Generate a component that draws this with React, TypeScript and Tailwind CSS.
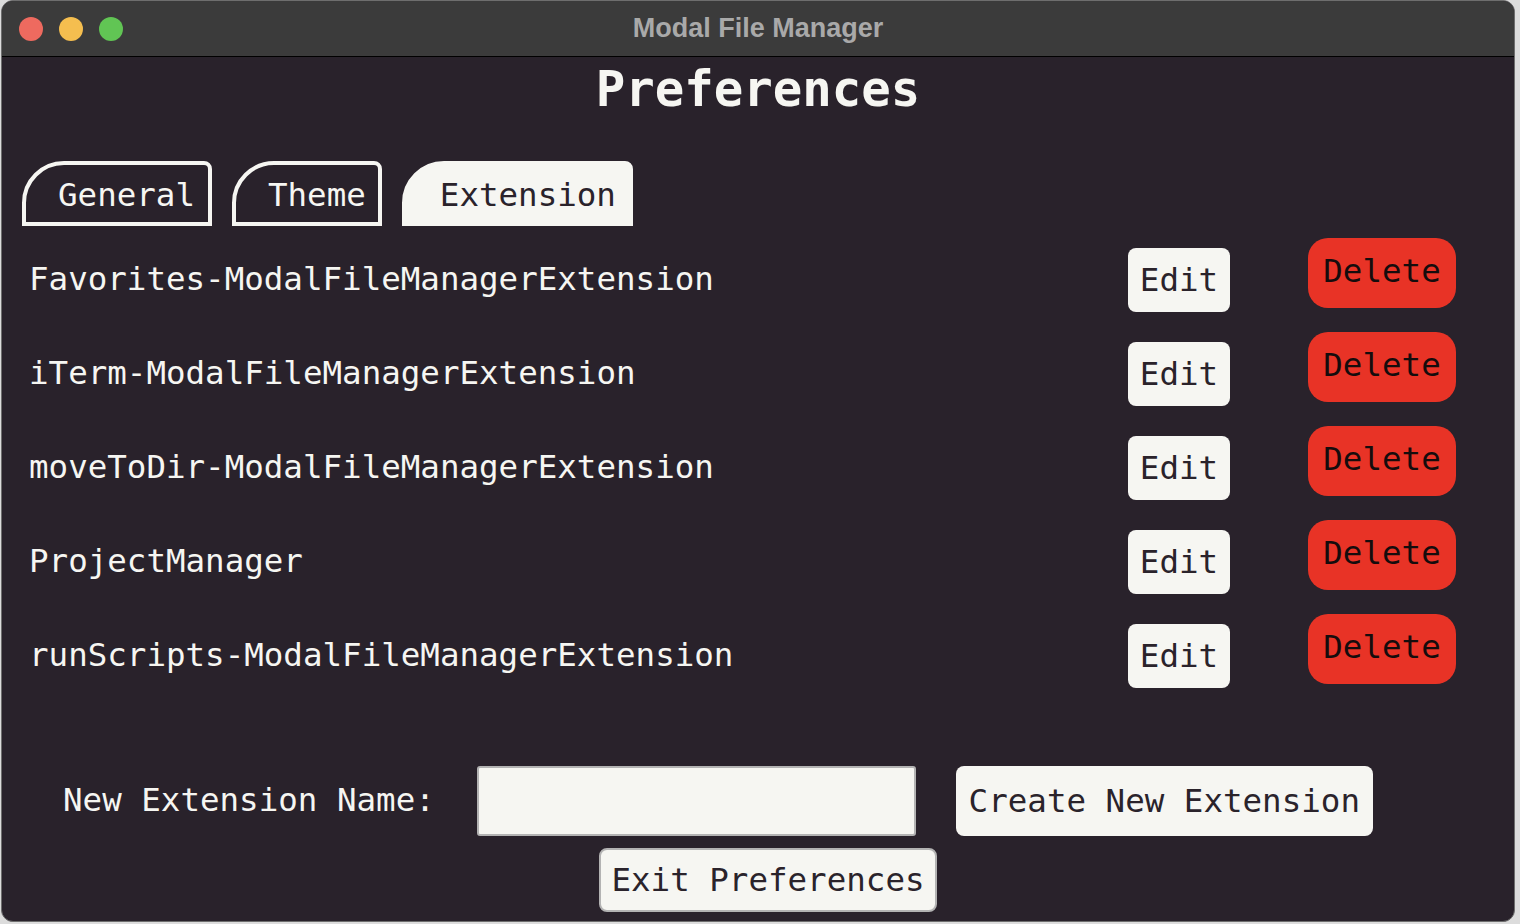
import React from "react";

const mono = { fontFamily: '"DejaVu Sans Mono", "Liberation Mono", monospace' } as React.CSSProperties;

const rows = [
  "Favorites-ModalFileManagerExtension",
  "iTerm-ModalFileManagerExtension",
  "moveToDir-ModalFileManagerExtension",
  "ProjectManager",
  "runScripts-ModalFileManagerExtension",
];

export default function App() {
  return (
    <div className="w-[1520px] h-[924px] bg-[#dcdcdc] overflow-hidden">
      <div className="ml-[1px] w-[1514px] h-[922px] rounded-[12px] border border-[#6e6e6e] overflow-hidden flex flex-col bg-[#29222b]">
        {/* Title bar */}
        <div className="h-[56px] shrink-0 bg-[#3b3b3b] border-b border-black flex items-center relative">
          <div className="flex items-center gap-[16px] pl-[17px]">
            <div className="w-[24px] h-[24px] rounded-full bg-[#ee6a5f]" />
            <div className="w-[24px] h-[24px] rounded-full bg-[#f5be4f]" />
            <div className="w-[24px] h-[24px] rounded-full bg-[#61c554]" />
          </div>
          <div
            className="absolute inset-0 flex items-center justify-center text-[27px] font-bold text-[#a9a9a9]"
            style={{ fontFamily: '"Liberation Sans", Arial, sans-serif' }}
          >
            Modal File Manager
          </div>
        </div>

        {/* Content */}
        <div className="flex-1 flex flex-col text-[#f6f6f2]" style={mono}>
          <h1 className="mt-[4px] h-[58px] leading-[58px] text-center text-[49px] font-bold">Preferences</h1>

          {/* Tabs */}
          <div className="mt-[42px] flex items-stretch gap-[20px] pl-[20px] h-[65px]">
            <div className="flex items-center border-4 border-[#f6f6f2] rounded-tl-[42px] rounded-tr-[8px] pl-[32px] pr-[13px] pt-[4px] text-[32.5px] leading-none">
              General
            </div>
            <div className="flex items-center border-4 border-[#f6f6f2] rounded-tl-[42px] rounded-tr-[8px] pl-[32px] pr-[12px] pt-[4px] text-[32.5px] leading-none">
              Theme
            </div>
            <div className="flex items-center border-4 border-[#f6f6f2] bg-[#f6f6f2] text-[#2a232b] rounded-tl-[42px] rounded-tr-[8px] pl-[34px] pr-[13px] pt-[4px] text-[32.5px] leading-none">
              Extension
            </div>
          </div>

          {/* Extension rows */}
          <div className="flex flex-col">
            {rows.map((name) => (
              <div key={name} className="h-[94px] flex items-center pl-[27px]">
                <div className="flex-1 text-[32.5px] leading-none mt-[12px]">{name}</div>
                <button className="mt-[14px] w-[102px] h-[64px] rounded-[8px] bg-[#f6f6f2] text-[#2a232b] text-[32.5px] leading-none flex items-center justify-center">
                  Edit
                </button>
                <button className="ml-[78px] mr-[58px] w-[148px] h-[70px] rounded-[20px] bg-[#e83326] text-[#150c0d] text-[32.5px] leading-none flex items-center justify-center pb-[4px]">
                  Delete
                </button>
              </div>
            ))}
          </div>

          {/* Bottom form */}
          <div className="mt-[70px] flex items-center pl-[61px]">
            <div className="text-[32.5px] leading-none -mt-[2px]">New Extension Name:</div>
            <div className="ml-[42px] w-[439px] h-[70px] bg-[#f6f6f2] border-2 border-[#b3b3b3] rounded-[3px]" />
            <button className="ml-[40px] w-[417px] h-[70px] rounded-[8px] bg-[#f6f6f2] text-[#2a232b] text-[32.5px] leading-none flex items-center justify-center">
              Create New Extension
            </button>
          </div>
          <div className="mt-[12px] flex pl-[597px]">
            <button className="w-[338px] h-[64px] rounded-[8px] bg-[#f6f6f2] border-2 border-[#b3b3b3] text-[#2a232b] text-[32.5px] leading-none flex items-center justify-center">
              Exit Preferences
            </button>
          </div>
        </div>
      </div>
    </div>
  );
}
